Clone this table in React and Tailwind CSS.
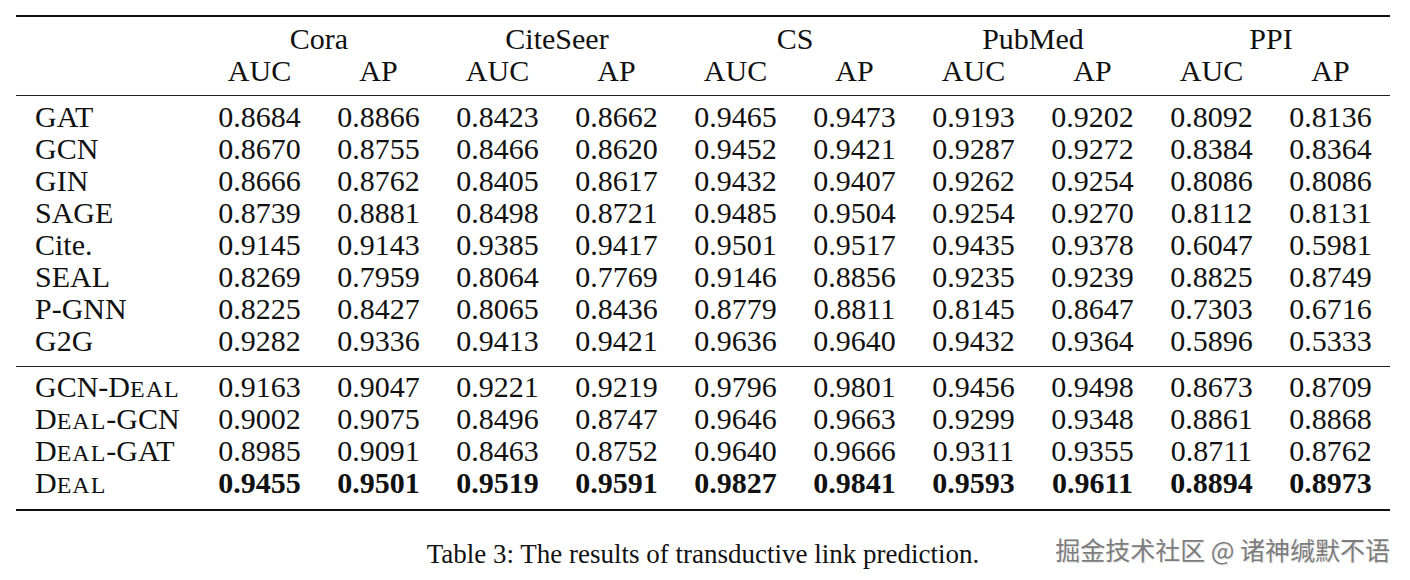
import { Fragment } from 'react';

const groups = ['Cora', 'CiteSeer', 'CS', 'PubMed', 'PPI'];

const baseRows = [
  ['GAT', '0.8684 0.8866 0.8423 0.8662 0.9465 0.9473 0.9193 0.9202 0.8092 0.8136'],
  ['GCN', '0.8670 0.8755 0.8466 0.8620 0.9452 0.9421 0.9287 0.9272 0.8384 0.8364'],
  ['GIN', '0.8666 0.8762 0.8405 0.8617 0.9432 0.9407 0.9262 0.9254 0.8086 0.8086'],
  ['SAGE', '0.8739 0.8881 0.8498 0.8721 0.9485 0.9504 0.9254 0.9270 0.8112 0.8131'],
  ['Cite.', '0.9145 0.9143 0.9385 0.9417 0.9501 0.9517 0.9435 0.9378 0.6047 0.5981'],
  ['SEAL', '0.8269 0.7959 0.8064 0.7769 0.9146 0.8856 0.9235 0.9239 0.8825 0.8749'],
  ['P-GNN', '0.8225 0.8427 0.8065 0.8436 0.8779 0.8811 0.8145 0.8647 0.7303 0.6716'],
  ['G2G', '0.9282 0.9336 0.9413 0.9421 0.9636 0.9640 0.9432 0.9364 0.5896 0.5333'],
];

// DEAL is typeset in small caps: full-size D, smaller EAL
const Deal = () => (
  <>
    D<span className="text-[24px] tracking-[1px]">EAL</span>
  </>
);

const dealRows = [
  ['gcn-deal', <>GCN-<Deal /></>, '0.9163 0.9047 0.9221 0.9219 0.9796 0.9801 0.9456 0.9498 0.8673 0.8709'],
  ['deal-gcn', <><Deal />-GCN</>, '0.9002 0.9075 0.8496 0.8747 0.9646 0.9663 0.9299 0.9348 0.8861 0.8868'],
  ['deal-gat', <><Deal />-GAT</>, '0.8985 0.9091 0.8463 0.8752 0.9640 0.9666 0.9311 0.9355 0.8711 0.8762'],
  ['deal', <Deal />, '0.9455 0.9501 0.9519 0.9591 0.9827 0.9841 0.9593 0.9611 0.8894 0.8973', true],
];

const Row = ({ name, values, bold }) => (
  <div className="grid grid-cols-[184px_repeat(10,119px)] h-[32px] leading-[32px]">
    <div className="pl-[19px] whitespace-nowrap">{name}</div>
    {values.split(' ').map((v, i) => (
      <div key={i} className={`text-center ${bold ? 'font-bold' : ''}`}>{v}</div>
    ))}
  </div>
);

const App = () => {
  return (
    <div className="relative w-[1410px] h-[580px] bg-white text-[#111] font-['Liberation_Serif',serif] text-[30px] pt-[15px]">
      <div className="ml-[16px] w-[1374px]">
        <div className="h-[2px] bg-[#111]" />

        {/* header */}
        <div className="pt-[6px] pb-[8px]">
          <div className="grid grid-cols-[184px_repeat(5,238px)] h-[32px] leading-[32px]">
            <div />
            {groups.map((g) => (
              <div key={g} className="text-center">{g}</div>
            ))}
          </div>
          <div className="grid grid-cols-[184px_repeat(10,119px)] h-[32px] leading-[32px]">
            <div />
            {groups.map((g) => (
              <Fragment key={g}>
                <div className="text-center">AUC</div>
                <div className="text-center">AP</div>
              </Fragment>
            ))}
          </div>
        </div>
        <div className="h-px bg-[#222]" />

        <div className="pt-[5px] pb-[9px]">
          {baseRows.map(([name, values]) => (
            <Row key={name} name={name} values={values} />
          ))}
        </div>
        <div className="h-px bg-[#222]" />

        <div className="pt-[4px] pb-[10px]">
          {dealRows.map(([id, name, values, bold]) => (
            <Row key={id} name={name} values={values} bold={bold} />
          ))}
        </div>
        <div className="h-[2px] bg-[#111]" />

        <div className="mt-[27px] text-center text-[27px] leading-[32px]">
          Table 3: The results of transductive link prediction.
        </div>
      </div>

      <div className="absolute right-[20px] top-[531px] font-['Noto_Sans_CJK_SC',sans-serif] text-[25px] leading-[36px] text-[#7c7c7c] [text-shadow:0_0_1px_#fff,1px_1px_1px_#ddd]">
        掘金技术社区 @ 诸神缄默不语
      </div>
    </div>
  );
};

export default App;
